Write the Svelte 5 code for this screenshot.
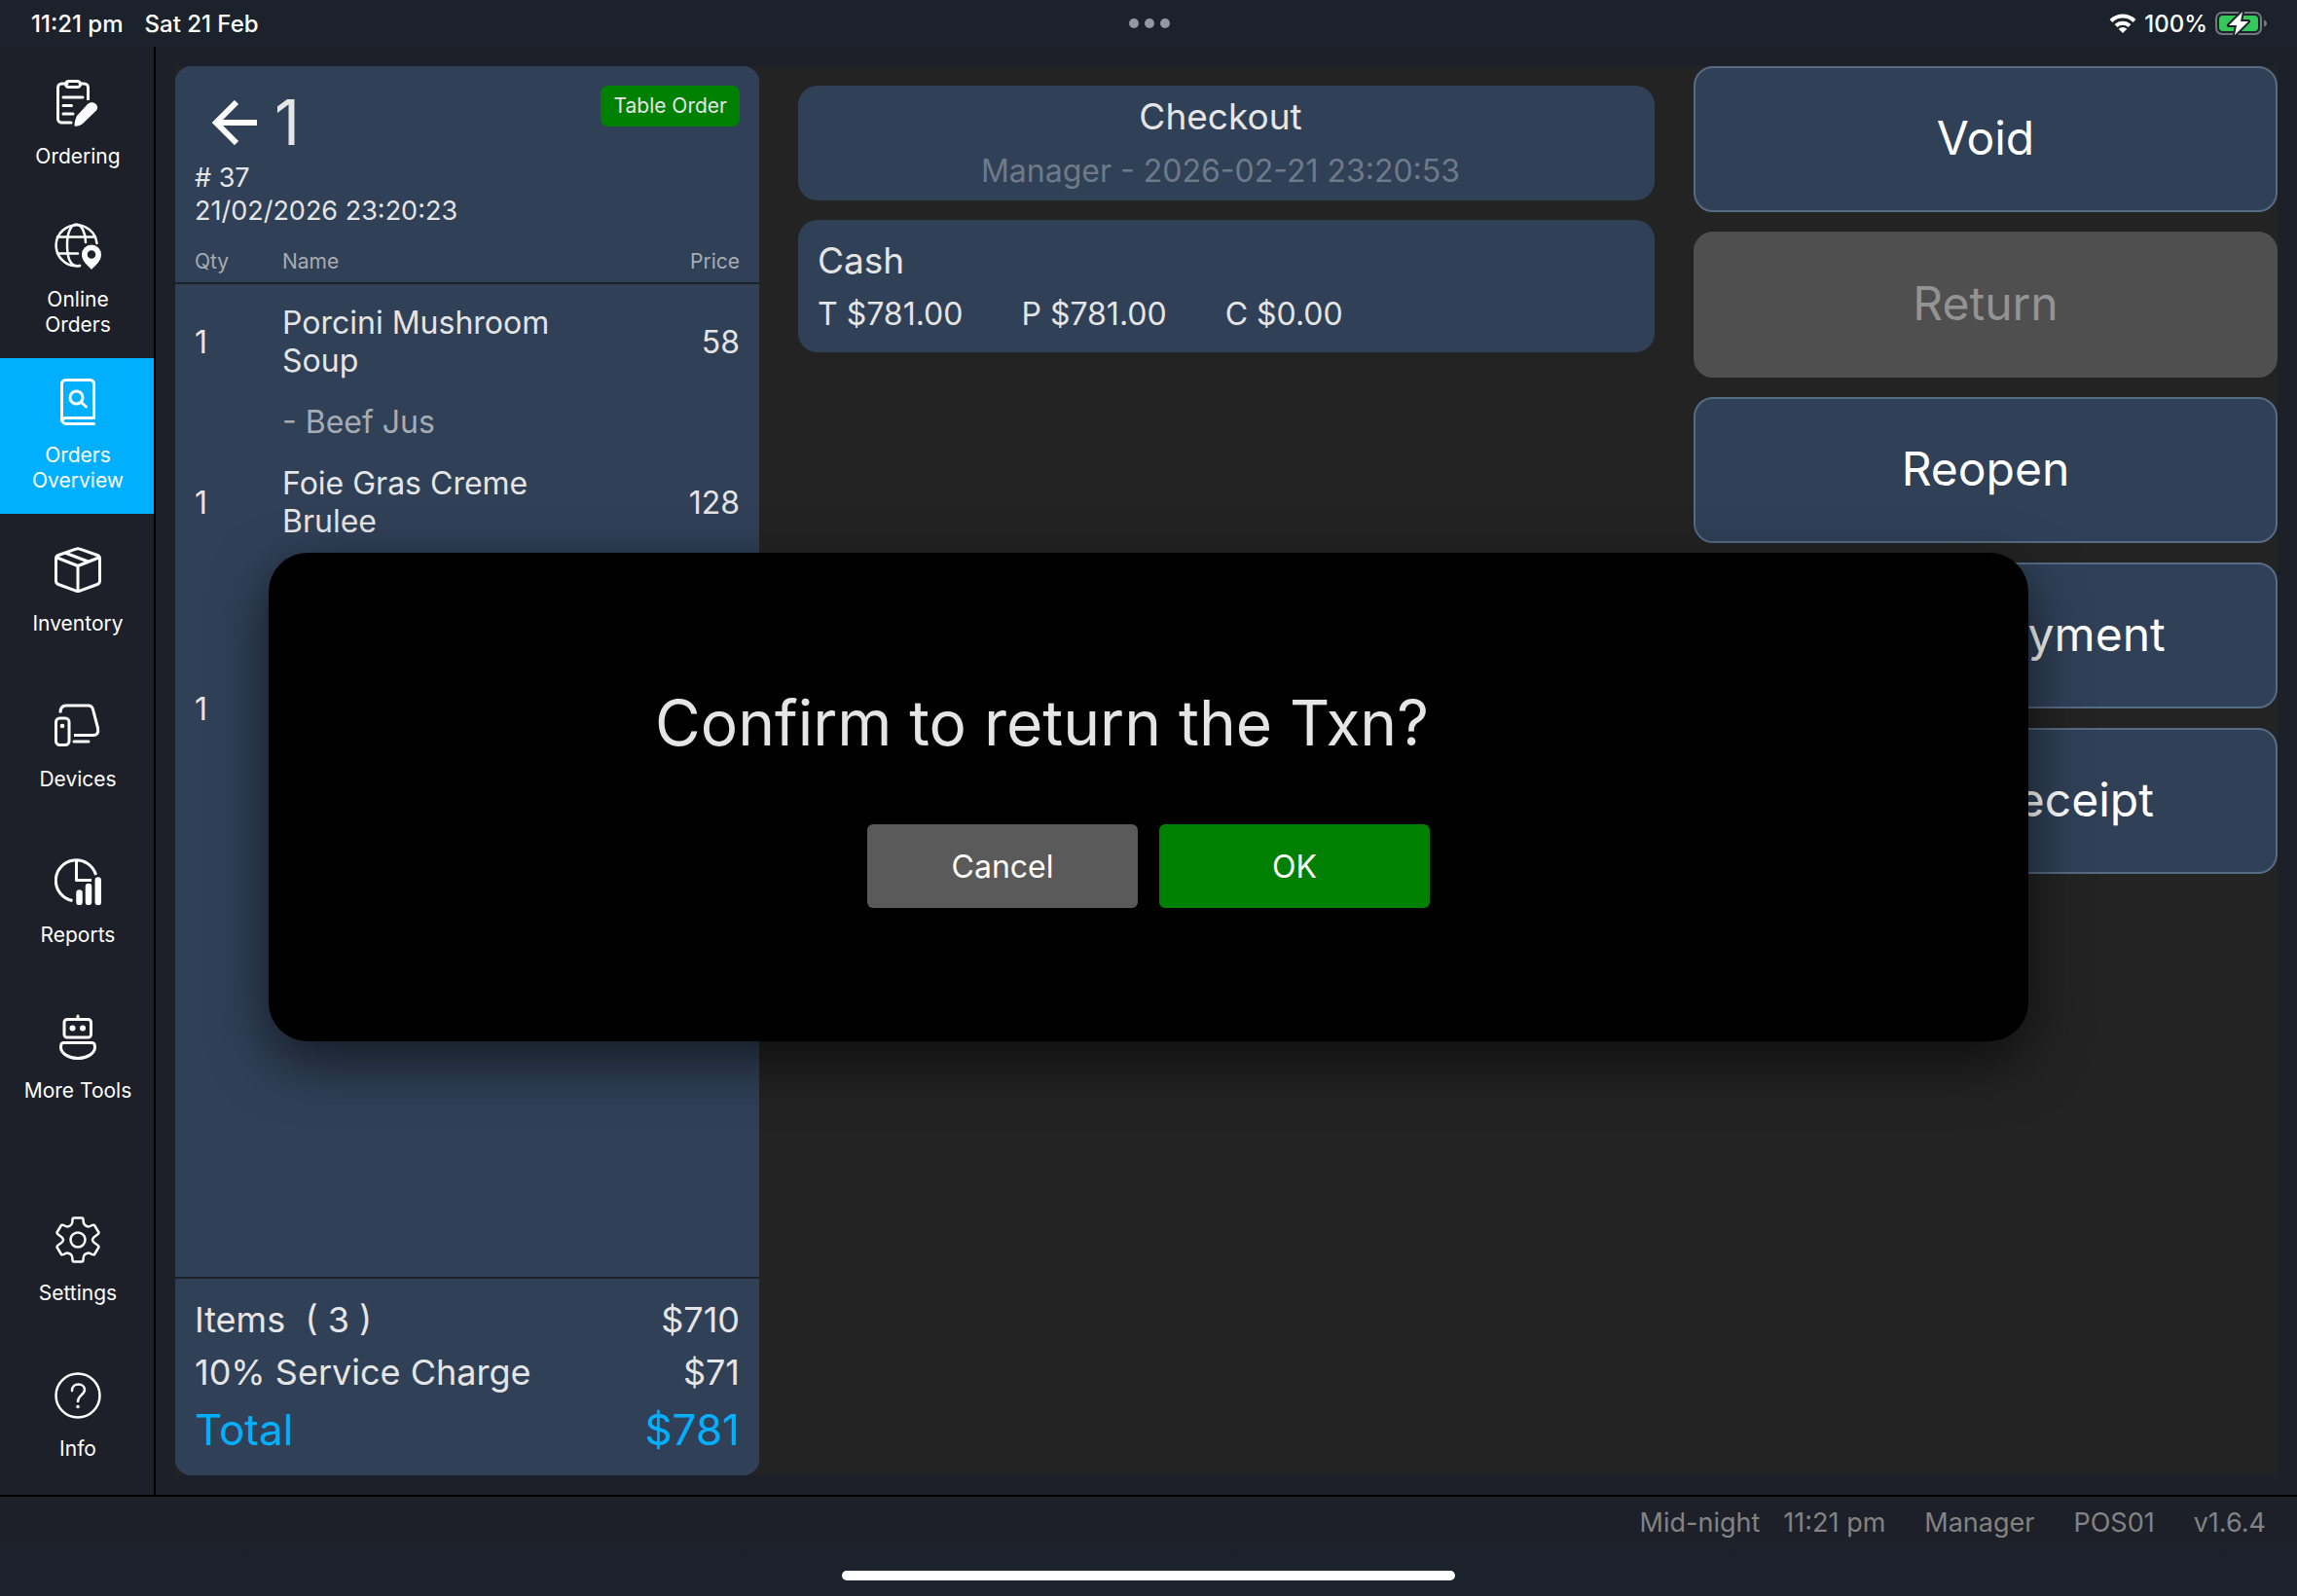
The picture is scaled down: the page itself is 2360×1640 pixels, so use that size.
<script lang="ts">
  interface OrderLine {
    qty: number;
    name: string;
    price?: number;
    modifiers: string[];
  }

  const mainNav = [
    { id: 'ordering', label: 'Ordering' },
    { id: 'online',   label: 'Online Orders' },
    { id: 'overview', label: 'Orders Overview' },
    { id: 'inventory', label: 'Inventory' },
    { id: 'devices',  label: 'Devices' },
    { id: 'reports',  label: 'Reports' },
    { id: 'tools',    label: 'More Tools' },
  ];
  const footNav = [
    { id: 'settings', label: 'Settings' },
    { id: 'info',     label: 'Info' },
  ];

  const lines: OrderLine[] = [
    { qty: 1, name: 'Porcini Mushroom Soup', price: 58, modifiers: ['- Beef Jus'] },
    { qty: 1, name: 'Foie Gras Creme Brulee', price: 128, modifiers: ['- Brioche', '- Apple Jam'] },
    { qty: 1, name: 'Wagyu Striploin', modifiers: [] },
  ];

  const totals = [
    { label: 'Items  ( 3 )', amount: '$710' },
    { label: '10% Service Charge', amount: '$71' },
  ];

  const actions = ['Void', 'Return', 'Reopen', 'Modify Payment', 'Reprint Receipt'];

  let active = $state('overview');
  let confirming = $state(true);
</script>

{#snippet icon(id: string)}
  <svg class="icon" viewBox="0 0 48 48" fill="none" stroke="currentColor" stroke-width="3" stroke-linecap="round" stroke-linejoin="round" aria-hidden="true">
    {#if id === 'ordering'}
      <path d="M13 4H7.500a4 4 0 0 0-4 4v32a4 4 0 0 0 4 4H17" />
      <path d="M26 4h4.500a4 4 0 0 1 4 4v13" stroke-linecap="butt" />
      <rect x="11.500" y="1.500" width="15" height="6" rx="3" />
      <path d="M9 18h20M9 26.500h8.500M9 35h10" />
      <path d="M34 25c5-5 13 1 9 6.500L29 45c-2 1.800-8.500 4-8.500 2 0-2 .5-6 2.500-10z" fill="currentColor" stroke="none" />
    {:else if id === 'online'}
      <g stroke-width="2.500">
        <path d="M26 44A21 21 0 1 1 43.500 21" />
        <path d="M26 44c-11 2-13-10-13-22S17 1.500 22.500 1.500 32 11 32 20" />
        <path d="M3 14.500h39M3 31.500h21" />
      </g>
      <path d="M38 22.500a10 10 0 0 0-10 10c0 7 6 11 10 15.500 4-4.500 10-8.500 10-15.500a10 10 0 0 0-10-10zm0 5.700a4.300 4.300 0 1 1 0 8.600 4.300 4.300 0 0 1 0-8.600z" fill="currentColor" fill-rule="evenodd" stroke="none" />
    {:else if id === 'overview'}
      <path d="M40.500 46.500H12.500a5 5 0 0 1-5-5V5.500a4 4 0 0 1 4-4h25a4 4 0 0 1 4 4v35H12.500a5 5 0 0 0-5 3" />
      <circle cx="22.500" cy="19.500" r="6.500" />
      <path d="M27.500 24.500l5 4.500" />
    {:else if id === 'inventory'}
      <path d="M26 2.200 44 8.500q2.500 1 2.500 3.500v23q0 2.500-2.500 3.500L26 45.200q-2 .8-4 0L4 38.500q-2.500-1-2.500-3.500V12q0-2.500 2.500-3.500L22 2.200q2-.8 4 0z" />
      <path d="M2.500 11 24 19.500 45.500 11M24 19.500V45" />
      <path d="M12 6.500l22.500 8.500" />
    {:else if id === 'devices'}
      <path d="M6 10.500c0-5 2.500-7.500 6-7.500h22.500q4 0 5 4l5 19q1.500 7.500-5 7.500H20" stroke-linecap="butt" />
      <rect x="1.500" y="16" width="13.500" height="27.500" rx="4" />
      <circle cx="8" cy="24" r="2.300" fill="currentColor" stroke="none" />
      <path d="M20 40h15" />
    {:else if id === 'reports'}
      <path d="M18.500 43.500A21 21 0 1 1 42.500 17" stroke-linecap="butt" />
      <path d="M22.500 2v20.500H38" stroke-linecap="butt" />
      <path d="M25.500 35.500v9.500M35 29v16M44.800 22.500V45" stroke-width="6.500" />
    {:else if id === 'tools'}
      <path d="M24 2v3" />
      <rect x="10" y="5.500" width="27.500" height="18.500" rx="3" />
      <circle cx="18.500" cy="14.500" r="3" fill="currentColor" stroke="none" />
      <circle cx="29" cy="14.500" r="3" fill="currentColor" stroke="none" />
      <path d="M9 29.500h29.500q3 0 3 4.500c0 7-9 11.500-17.500 11.500S6.500 41 6.500 34q0-4.500 2.500-4.500z" />
    {:else if id === 'settings'}
      <g stroke-width="2.500">
        <path d="M20 1.500h8q1.500 0 1.500 2 0 6.500 5.500 7c2 0 4.500-3 6-1.500l4.500 7.500c1 2-6.500 4-6.500 7.500s7.500 5.500 6.500 7.500L41 39c-1.500 1.500-4-1.500-6-1.500-5.500.5-5.500 4.500-5.500 7q0 2-1.500 2h-8q-1.500 0-1.500-2c0-2.500 0-6.500-5.500-7-2 0-4.500 3-6 1.500l-4.500-7.500c-1-2 6.500-4 6.500-7.500S1.500 18.500 2.500 16.500L7 9c1.500-1.500 4 1.500 6 1.500 5.500-.5 5.500-4.500 5.500-7q0-2 1.500-2z" />
        <circle cx="24" cy="24" r="7.500" />
      </g>
    {:else}
      <g stroke-width="2.500">
        <circle cx="24" cy="24" r="22.500" />
        <path d="M18 19c0-9 13-8 13-1 0 5-7 6-7 12" />
      </g>
      <circle cx="24" cy="35.500" r="1.800" fill="currentColor" stroke="none" />
    {/if}
  </svg>
{/snippet}

<div class="app">
  <header class="status">
    <div class="clock"><span>11:21 pm</span><span>Sat 21 Feb</span></div>
    <div class="dots"><i></i><i></i><i></i></div>
    <div class="power">
      <svg width="28" height="20" viewBox="0 0 28 20" fill="none" stroke="currentColor" stroke-width="4" aria-hidden="true">
        <path d="M2 7.500a17 17 0 0 1 24 0" />
        <path d="M7 12.500a10 10 0 0 1 14 0" />
        <path d="M9.700 15.800a6.200 6.200 0 0 1 8.600 0L14 20z" fill="currentColor" stroke="none" />
      </svg>
      <span>100%</span>
      <svg width="54" height="24" viewBox="0 0 54 24" aria-hidden="true">
        <rect x="1" y="1" width="46" height="22" rx="6" fill="none" stroke="#74787d" stroke-width="2" />
        <rect x="4" y="4" width="40" height="16" rx="4" fill="#34c759" />
        <path d="M50 8.500c4 1 4 6 0 7z" fill="#74787d" />
        <path d="M28 0 14 14h8l-2 10 14-14h-8z" fill="#fff" stroke="#1b212b" stroke-width="4" stroke-linejoin="round" paint-order="stroke" />
      </svg>
    </div>
  </header>

  <div class="body">
    <nav class="sidebar">
      {#each mainNav as item (item.id)}
        <button class="nav-item" class:active={active === item.id} onclick={() => (active = item.id)}>
          {@render icon(item.id)}
          <span>{item.label}</span>
        </button>
      {/each}
      <div class="nav-foot">
        {#each footNav as item (item.id)}
          <button class="nav-item" class:active={active === item.id} onclick={() => (active = item.id)}>
            {@render icon(item.id)}
            <span>{item.label}</span>
          </button>
        {/each}
      </div>
    </nav>

    <main>
      <div class="workspace">
        <section class="order">
          <div class="order-head">
            <div class="order-title">
              <button class="back" aria-label="Back">
                <svg width="46" height="46" viewBox="0 0 46 46" fill="none" stroke="currentColor" stroke-width="6" aria-hidden="true">
                  <path d="M25 2 4 23l21 21M4 23h42" />
                </svg>
              </button>
              <h1>1</h1>
            </div>
            <span class="tag">Table Order</span>
          </div>
          <div class="order-meta">
            <div># 37</div>
            <div>21/02/2026 23:20:23</div>
          </div>
          <table>
            <thead>
              <tr><th class="qty">Qty</th><th>Name</th><th class="price">Price</th></tr>
            </thead>
            <tbody>
              {#each lines as line}
                <tr>
                  <td class="qty">{line.qty}</td>
                  <td class="name"><div>{line.name}</div></td>
                  <td class="price">{line.price ?? ''}</td>
                </tr>
                {#each line.modifiers as modifier}
                  <tr class="modifier">
                    <td></td>
                    <td class="name"><div>{modifier}</div></td>
                    <td></td>
                  </tr>
                {/each}
              {/each}
            </tbody>
          </table>
          <div class="totals">
            {#each totals as row}
              <div class="total-row"><span>{row.label}</span><span>{row.amount}</span></div>
            {/each}
            <div class="total-row grand"><span>Total</span><span>$781</span></div>
          </div>
        </section>

        <section class="payments">
          <div class="card checkout">
            <h2>Checkout</h2>
            <p>Manager - 2026-02-21 23:20:53</p>
          </div>
          <div class="card payment">
            <h2>Cash</h2>
            <div class="amounts">
              <span>T $781.00</span>
              <span>P $781.00</span>
              <span>C $0.00</span>
            </div>
          </div>
        </section>

        <section class="actions">
          {#each actions as action}
            <button disabled={action === 'Return'}>{action}</button>
          {/each}
        </section>
      </div>
    </main>
  </div>

  <footer>
    <div class="shift"><span>Mid-night</span><span>11:21 pm</span></div>
    <span>Manager</span>
    <span>POS01</span>
    <span>v1.6.4</span>
  </footer>
  <div class="home-bar"></div>

  {#if confirming}
    <div class="overlay">
      <div class="dialog" role="dialog" aria-modal="true" aria-labelledby="dialog-title">
        <h2 id="dialog-title">Confirm to return the Txn?</h2>
        <div class="dialog-buttons">
          <button onclick={() => (confirming = false)}>Cancel</button>
          <button class="ok" onclick={() => (confirming = false)}>OK</button>
        </div>
      </div>
    </div>
  {/if}
</div>

<style>
  :global(body) {
    background: #1d2029;
  }
  .app {
    --text: #e5e5e5;
    --card: #304057;
    --line: #1d2029;
    --accent: #00b0ff;
    position: relative;
    display: flex;
    flex-direction: column;
    min-height: 100vh;
    background: linear-gradient(#1d2029 96%, #1b222b 98%);
    color: var(--text);
    font-family: Inter, 'Liberation Sans', sans-serif;
  }
  h1, h2, p {
    margin: 0;
    font-weight: 400;
  }
  button {
    border: 0;
    padding: 0;
    background: none;
    color: inherit;
    font: inherit;
    cursor: pointer;
  }

  .status {
    display: grid;
    grid-template-columns: 1fr auto 1fr;
    align-items: center;
    height: 48px;
    padding: 0 30px 0 32px;
    background: #1b222b;
    color: #fff;
    font-size: 24px;
    font-weight: 500;
  }
  .clock {
    display: flex;
    gap: 22px;
  }
  .dots {
    display: flex;
    gap: 6px;
  }
  .dots i {
    width: 10px;
    height: 10px;
    border-radius: 50%;
    background: #9298a1;
  }
  .power {
    display: flex;
    align-items: center;
    justify-content: flex-end;
    gap: 8px;
  }

  .body {
    display: flex;
    flex: 1;
  }
  .sidebar {
    display: flex;
    flex-direction: column;
    width: 158px;
    border-right: 2px solid #000;
  }
  .nav-item {
    display: flex;
    flex-direction: column;
    align-items: center;
    justify-content: center;
    gap: 18px;
    height: 160px;
    padding: 0 19px 0 21px;
    color: #fff;
    font-size: 21px;
    line-height: 26px;
  }
  .nav-item.active {
    background: var(--accent);
  }
  .icon {
    width: 48px;
    height: 48px;
    flex: none;
  }
  .nav-foot {
    display: flex;
    flex-direction: column;
    margin-top: auto;
  }

  main {
    display: flex;
    flex: 1;
    padding: 20px;
  }
  .workspace {
    display: grid;
    grid-template-columns: 5fr 8fr 5fr;
    flex: 1;
    background: #232323;
  }

  .order {
    display: flex;
    flex-direction: column;
    border-radius: 16px;
    background: var(--card);
  }
  .order-head {
    display: flex;
    align-items: flex-start;
    justify-content: space-between;
    padding: 20px 20px 0 38px;
  }
  .order-title {
    display: flex;
    align-items: center;
    gap: 18px;
    height: 76px;
  }
  .back {
    display: flex;
    color: #fff;
  }
  h1 {
    font-size: 64px;
    line-height: 76px;
  }
  .tag {
    padding: 8px 13px;
    border-radius: 8px;
    background: #008000;
    font-size: 21px;
    line-height: 26px;
  }
  .order-meta {
    padding: 2px 20px 0;
    font-size: 27px;
    line-height: 34px;
  }
  table {
    width: 100%;
    border-collapse: collapse;
    font-size: 32px;
    line-height: 39px;
  }
  th {
    height: 42px;
    padding: 14px 0 0;
    border-bottom: 2px solid var(--line);
    color: #a7acb3;
    font-size: 21px;
    font-weight: 400;
    line-height: 26px;
    text-align: left;
  }
  td {
    padding: 10px 0;
  }
  tbody tr:first-child td {
    padding-top: 20px;
  }
  .qty {
    width: 90px;
    padding-left: 20px;
  }
  .price {
    padding-right: 20px;
    text-align: right;
  }
  .name div {
    max-width: 300px;
  }
  .modifier td {
    padding: 14px 0;
    color: #a7acb3;
  }
  .totals {
    margin-top: auto;
    padding: 15px 20px;
    border-top: 2px solid var(--line);
    font-size: 36px;
    line-height: 54px;
  }
  .total-row {
    display: flex;
    justify-content: space-between;
    white-space: pre;
  }
  .grand {
    color: var(--accent);
    font-size: 44px;
    line-height: 64px;
  }

  .payments {
    display: flex;
    flex-direction: column;
    gap: 20px;
    padding: 20px 40px;
  }
  .card {
    border-radius: 20px;
    background: var(--card);
  }
  .card h2 {
    font-size: 37px;
    line-height: 44px;
  }
  .checkout {
    padding: 10px 32px 11px 20px;
    text-align: center;
  }
  .checkout p {
    padding-top: 14px;
    color: #6f7a89;
    font-size: 32px;
    line-height: 39px;
  }
  .payment {
    padding: 20px;
  }
  .amounts {
    display: flex;
    gap: 60px;
    padding-top: 13px;
    font-size: 32px;
    line-height: 39px;
  }

  .actions {
    display: flex;
    flex-direction: column;
    gap: 20px;
  }
  .actions button {
    height: 150px;
    padding-bottom: 4px;
    border: 2px solid #566b84;
    border-radius: 20px;
    background: var(--card);
    color: #fff;
    font-size: 48px;
  }
  .actions button:disabled {
    border-color: #4f4f4f;
    background: #4f4f4f;
    color: #939393;
  }

  footer {
    display: flex;
    justify-content: flex-end;
    gap: 40px;
    height: 66px;
    padding: 10px 32px 0;
    border-top: 2px solid #000;
    color: #838383;
    font-size: 27px;
    line-height: 34px;
  }
  .shift {
    display: flex;
    gap: 24px;
  }
  .home-bar {
    align-self: center;
    width: 630px;
    height: 10px;
    margin-bottom: 16px;
    border-radius: 5px;
    background: #fff;
  }

  .overlay {
    position: absolute;
    inset: 0;
    display: flex;
    align-items: center;
    padding: 0 276px 2px;
  }
  .dialog {
    display: flex;
    flex: 1;
    flex-direction: column;
    align-items: center;
    gap: 62px;
    padding: 133px 0 137px;
    border-radius: 40px;
    background: #000;
    box-shadow: 0 20px 60px rgba(0, 0, 0, 0.6);
  }
  .dialog h2 {
    width: 1014px;
    font-size: 64px;
    line-height: 84px;
  }
  .dialog-buttons {
    display: flex;
    gap: 22px;
  }
  .dialog-buttons button {
    width: 278px;
    height: 86px;
    border-radius: 6px;
    background: #5a5a5a;
    color: #fff;
    font-size: 32px;
  }
  .dialog-buttons .ok {
    background: #008000;
  }
</style>
